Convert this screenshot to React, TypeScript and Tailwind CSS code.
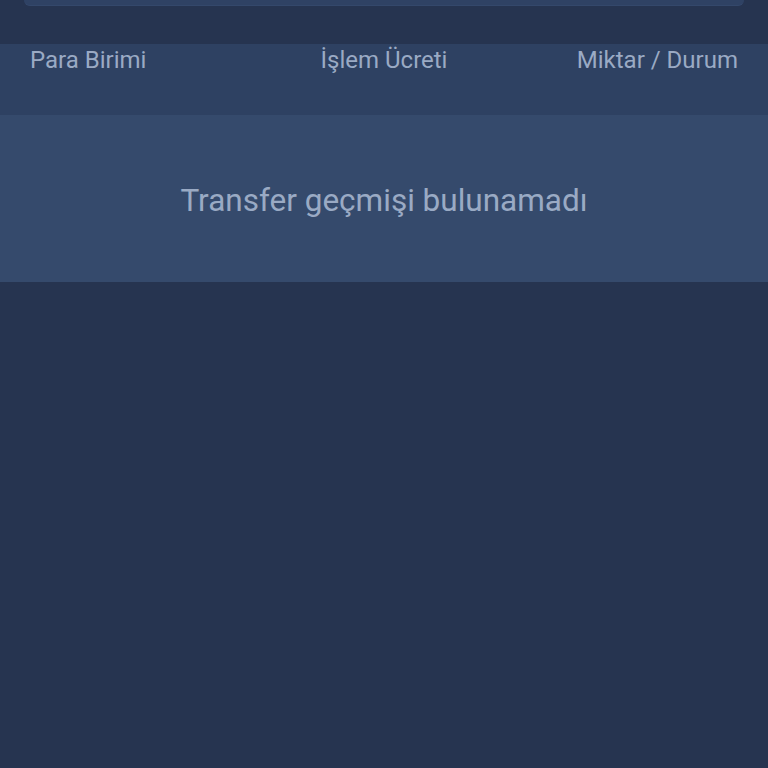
import React from 'react';

const App: React.FC = () => {
    return (
        <div
            className="min-h-[768px] w-full bg-[#263450] text-[#9aaac4]"
            style={{ fontFamily: 'Roboto, "Noto Sans", sans-serif' }}
        >
            {/* bottom edge of the card above */}
            <div className="px-[24px]">
                <div className="h-[6px] rounded-b-[6px] bg-[#2f4264] border-b border-[#34486b]" />
            </div>

            <div className="mt-[38px]">
                {/* table header */}
                <div className="h-[71px] bg-[#2e4162] px-[30px] grid grid-cols-3 items-start">
                    <span className="text-[24px] leading-[32px] text-left">Para Birimi</span>
                    <span className="text-[24px] leading-[32px] text-center">İşlem Ücreti</span>
                    <span className="text-[24px] leading-[32px] text-right">Miktar / Durum</span>
                </div>

                {/* empty state */}
                <div className="h-[167px] bg-[#354a6c] flex items-center justify-center pt-[4px]">
                    <p className="text-[31.5px] leading-[38px]">Transfer geçmişi bulunamadı</p>
                </div>
            </div>
        </div>
    );
};

export default App;
